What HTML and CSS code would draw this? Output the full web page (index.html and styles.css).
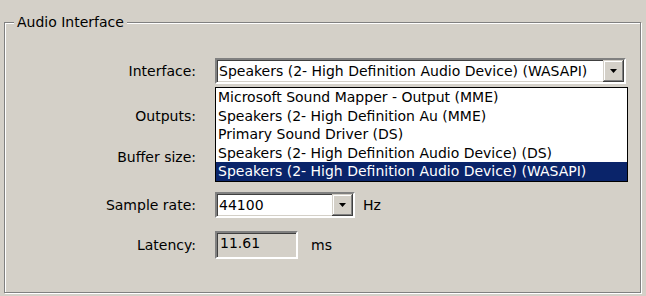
FILE: index.html
```html
<!DOCTYPE html>
<html lang="en">
<head>
  <meta charset="UTF-8" />
  <title>Audio Interface</title>
  <link rel="stylesheet" href="styles.css">
</head>
<body>

  <!-- Audio Interface group -->
  <fieldset class="group">
    <legend>Audio Interface</legend>

    <div class="row row-interface">
      <label class="label">Interface:</label>
      <div class="combo combo-wide">
        <span class="combo-text">Speakers (2- High Definition Audio Device) (WASAPI)</span>
        <span class="combo-btn">
          <svg width="7" height="4" viewBox="0 0 7 4"><polygon points="0,0 7,0 3.5,4" fill="#000"/></svg>
        </span>
      </div>

      <!-- open dropdown list -->
      <ul class="dropdown">
        <li>Microsoft Sound Mapper - Output (MME)</li>
        <li>Speakers (2- High Definition Au (MME)</li>
        <li>Primary Sound Driver (DS)</li>
        <li>Speakers (2- High Definition Audio Device) (DS)</li>
        <li class="selected">Speakers (2- High Definition Audio Device) (WASAPI)</li>
      </ul>
    </div>

    <div class="row row-outputs">
      <label class="label">Outputs:</label>
    </div>

    <div class="row row-buffer">
      <label class="label">Buffer size:</label>
    </div>

    <div class="row row-rate">
      <label class="label">Sample rate:</label>
      <div class="combo combo-small">
        <span class="combo-text">44100</span>
        <span class="combo-btn">
          <svg width="7" height="4" viewBox="0 0 7 4"><polygon points="0,0 7,0 3.5,4" fill="#000"/></svg>
        </span>
      </div>
      <span class="unit unit-hz">Hz</span>
    </div>

    <div class="row row-latency">
      <label class="label">Latency:</label>
      <div class="field">11.61</div>
      <span class="unit unit-ms">ms</span>
    </div>
  </fieldset>

</body>
</html>
```

FILE: styles.css
```css
* {
  box-sizing: border-box;
}

body {
  margin: 0;
  width: 646px;
  height: 296px;
  overflow: hidden;
  background-color: #d4d0c8;
  color: #000;
  font-family: 'DejaVu Sans', Tahoma, sans-serif;
  font-size: 14px;
  line-height: 16px;
}

/* Group box */
.group {
  margin: 14px 5px 0 4px;
  padding: 28px 0 0 0;
  width: 637px;
  height: 279px;
  border: 1px solid #808080;
  box-shadow: inset 1px 1px 0 #fff, 1px 1px 0 #fff;
}

.group legend {
  margin-left: 9px;
  padding: 0 3px;
  background-color: #d4d0c8;
  line-height: 16px;
}

/* Rows */
.row {
  display: flex;
  align-items: center;
  height: 26px;
}

.row-interface {
  position: relative;
}

.row-outputs {
  margin-top: 19px;
}

.row-buffer {
  margin-top: 15px;
}

.row-rate {
  margin-top: 22px;
}

.row-latency {
  margin-top: 13px;
  height: 28px;
}

.label {
  width: 191px;
  margin-right: 19px;
  text-align: right;
}

/* Combo box */
.combo {
  display: flex;
  height: 26px;
  background: #fff;
  border: 2px solid;
  border-color: #808080 #fff #fff #808080;
  box-shadow: inset 1px 1px 0 #404040, inset -1px -1px 0 #d4d0c8;
}

.combo-wide {
  width: 411px;
}

.combo-small {
  width: 140px;
}

.combo-text {
  flex: 1;
  padding: 3px 0 0 2px;
  white-space: nowrap;
  overflow: hidden;
}

.combo-btn {
  width: 21px;
  height: 22px;
  display: flex;
  align-items: center;
  justify-content: center;
  background: #d4d0c8;
  box-shadow: inset -1px -1px 0 #404040, inset 1px 1px 0 #d4d0c8,
              inset -2px -2px 0 #808080, inset 2px 2px 0 #fff;
}

/* Dropdown list */
.dropdown {
  position: absolute;
  top: 29px;
  left: 210px;
  width: 413px;
  margin: 0;
  padding: 0;
  list-style: none;
  background: #fff;
  border: 1px solid #000;
}

.dropdown li {
  height: 18.6px;
  line-height: 18.6px;
  padding-left: 2px;
  white-space: nowrap;
}

.dropdown li.selected {
  background-color: #0a246a;
  color: #fff;
}

/* Read-only field */
.field {
  width: 83px;
  height: 28px;
  padding: 2px 0 0 3px;
  border: 2px solid;
  border-color: #808080 #fff #fff #808080;
  box-shadow: inset 1px 1px 0 #404040, inset -1px -1px 0 #d4d0c8;
}

.unit-hz {
  margin-left: 8px;
}

.unit-ms {
  margin-left: 13px;
}
```
